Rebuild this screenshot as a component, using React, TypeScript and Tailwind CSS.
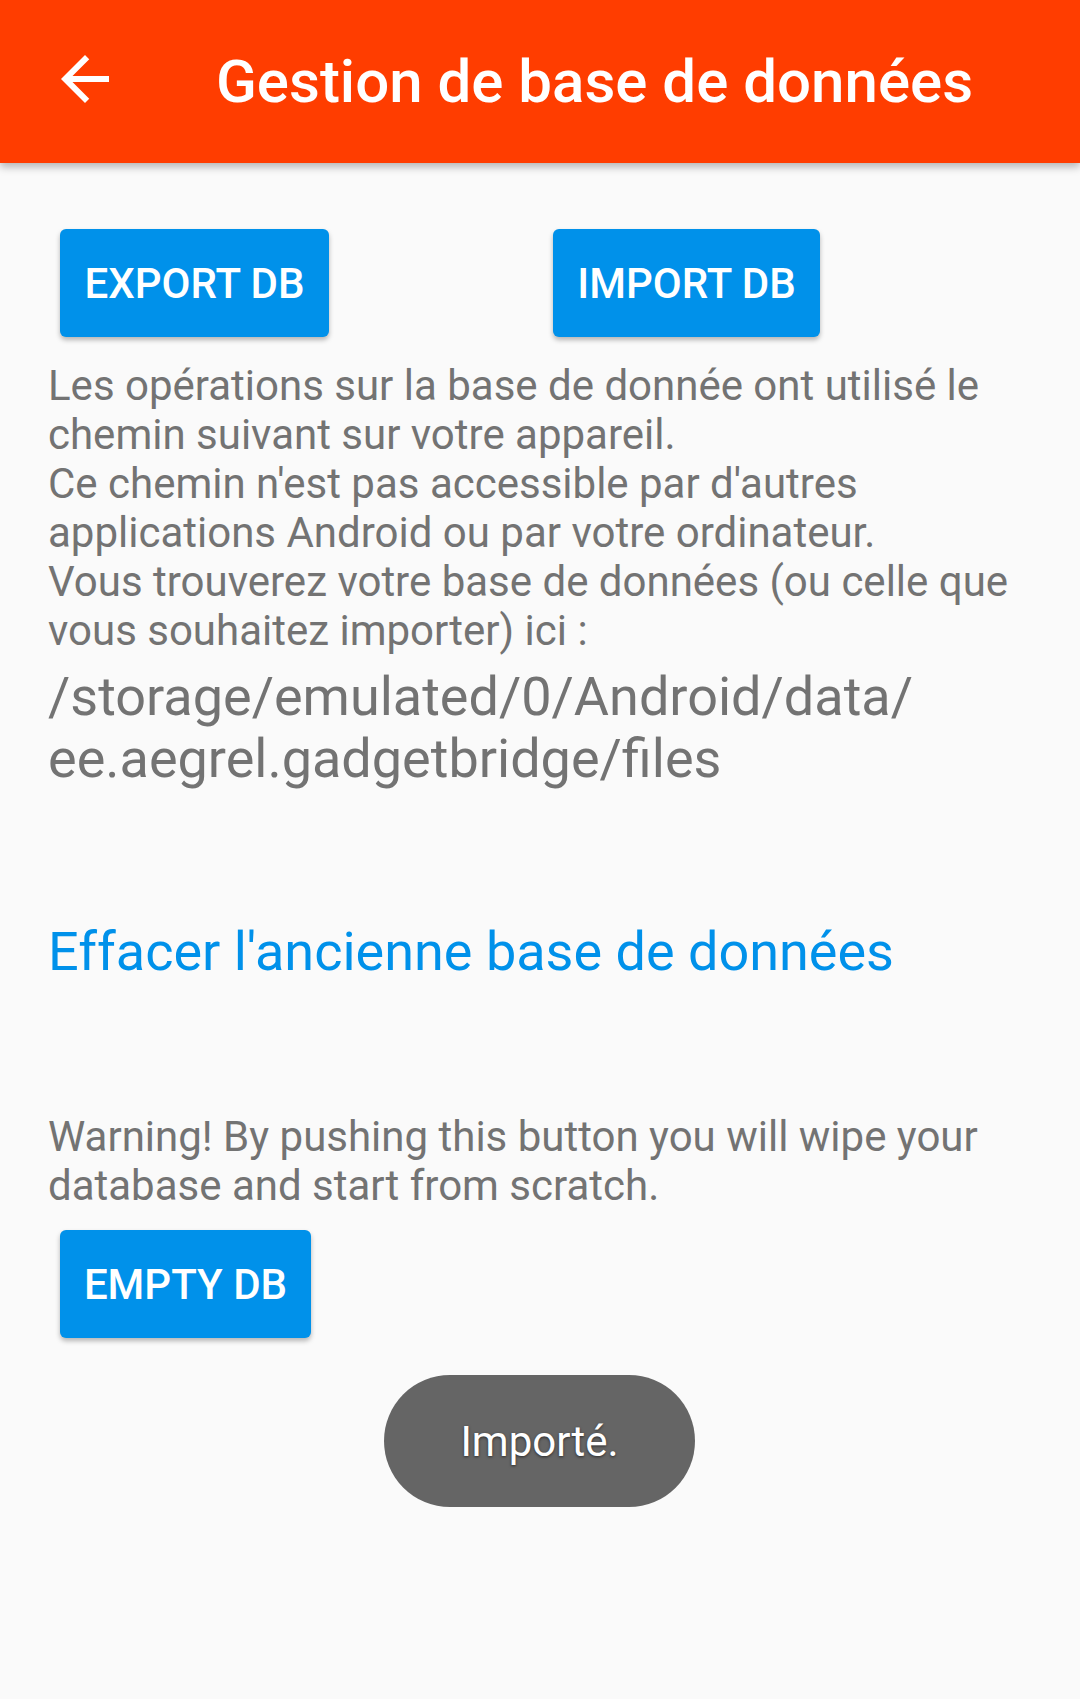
export default function App() {
  return (
    <div className="relative min-h-[1699px] bg-[#FAFAFA] font-['Roboto',sans-serif]">
      {/* Toolbar */}
      <header className="relative z-10 flex h-[163px] items-center bg-[#FF3D00] shadow-[0_4px_8px_rgba(0,0,0,0.28)]">
        <div className="ml-[49px] mb-[5px] h-[72px] w-[72px]">
          <svg viewBox="0 0 24 24" className="h-full w-full fill-white">
            <path d="M20 11H7.83l5.59-5.59L12 4l-8 8 8 8 1.41-1.41L7.83 13H20v-2z" />
          </svg>
        </div>
        <h1 className="ml-[95px] text-[60px] font-medium text-white">Gestion de base de données</h1>
      </header>

      {/* Export / import */}
      <div className="grid grid-cols-2 px-[48px] pt-[66px]">
        <div className="pl-[12px]">
          <button className="flex h-[108px] w-[269px] items-center justify-center rounded-[6px] bg-[#0091EA] text-[42px] font-medium text-white shadow-[0_3px_5px_rgba(0,0,0,0.28)]">
            EXPORT DB
          </button>
        </div>
        <div className="pl-[13px]">
          <button className="flex h-[108px] w-[267px] items-center justify-center rounded-[6px] bg-[#0091EA] text-[42px] font-medium text-white shadow-[0_3px_5px_rgba(0,0,0,0.28)]">
            IMPORT DB
          </button>
        </div>
      </div>

      <div className="px-[48px]">
        <p className="mt-[24px] whitespace-nowrap text-[42px] leading-[49px] text-[#737373]">
          Les opérations sur la base de donnée ont utilisé le
          <br />
          chemin suivant sur votre appareil.
          <br />
          Ce chemin n'est pas accessible par d'autres
          <br />
          applications Android ou par votre ordinateur.
          <br />
          Vous trouverez votre base de données (ou celle que
          <br />
          vous souhaitez importer) ici :
        </p>
        <p className="mt-[11px] whitespace-nowrap text-[54px] leading-[62px] text-[#737373]">
          /storage/emulated/0/Android/data/
          <br />
          ee.aegrel.gadgetbridge/files
        </p>

        <h2 className="mt-[131px] text-[54px] leading-[62px] text-[#0091EA]">Effacer l'ancienne base de données</h2>

        <p className="mt-[129px] whitespace-nowrap text-[42px] leading-[49px] text-[#737373]">
          Warning! By pushing this button you will wipe your
          <br />
          database and start from scratch.
        </p>

        <div className="mt-[20px] pl-[12px]">
          <button className="flex h-[108px] w-[251px] items-center justify-center rounded-[6px] bg-[#0091EA] text-[42px] font-medium text-white shadow-[0_3px_5px_rgba(0,0,0,0.28)]">
            EMPTY DB
          </button>
        </div>
      </div>

      {/* Toast */}
      <div className="absolute left-[384px] top-[1375px] flex h-[132px] w-[311px] items-center justify-center rounded-full bg-[#656565]">
        <span className="text-[42px] text-white [text-shadow:0_1px_3px_rgba(0,0,0,0.6)]">Importé.</span>
      </div>
    </div>
  );
}
